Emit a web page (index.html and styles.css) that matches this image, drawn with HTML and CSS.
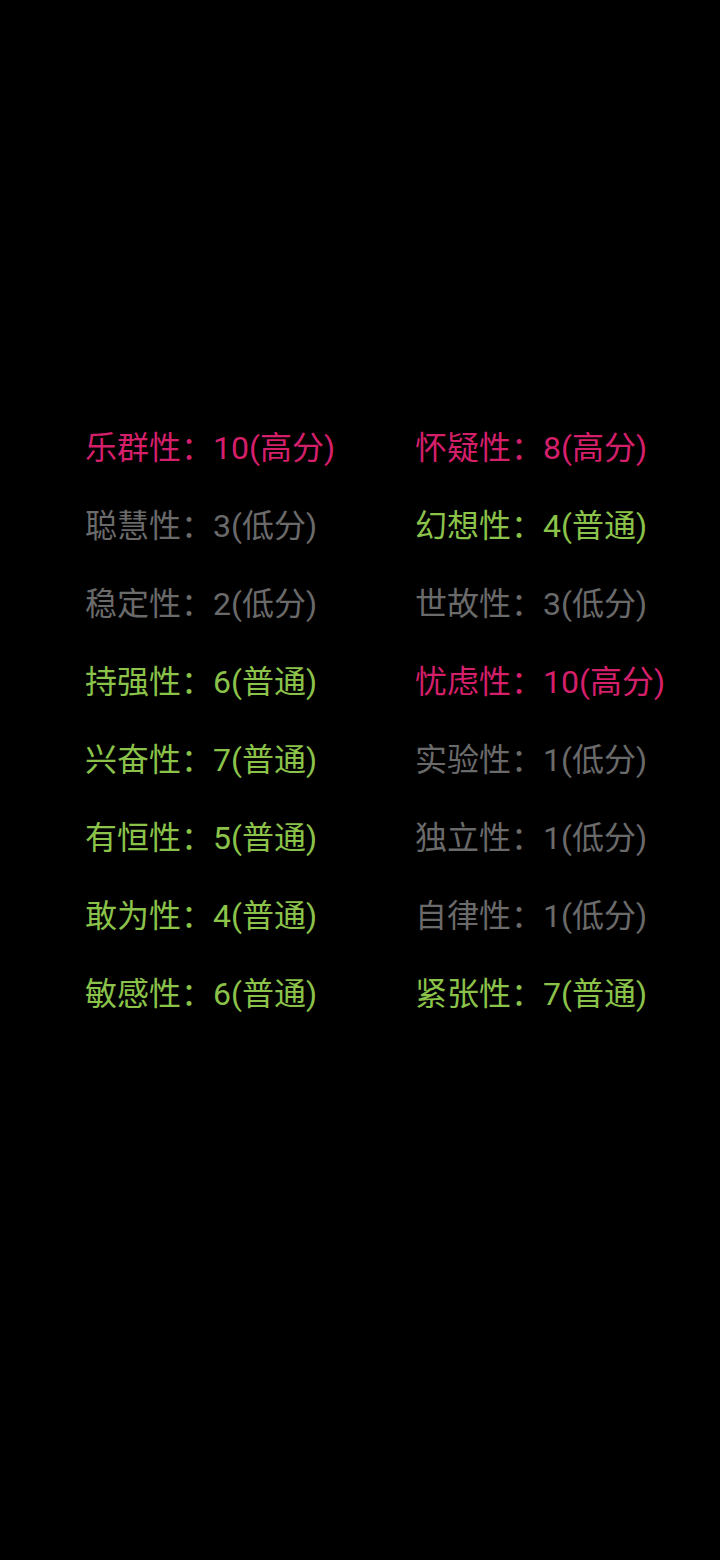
FILE: index.html
```html
<!DOCTYPE html>
<html lang="zh-CN">
<head>
<meta charset="utf-8">
<link rel="stylesheet" href="styles.css">
</head>
<body>
<div class="grid">
  <div class="item high">乐群性：10(高分)</div>
  <div class="item high">怀疑性：8(高分)</div>
  <div class="item low">聪慧性：3(低分)</div>
  <div class="item mid">幻想性：4(普通)</div>
  <div class="item low">稳定性：2(低分)</div>
  <div class="item low">世故性：3(低分)</div>
  <div class="item mid">持强性：6(普通)</div>
  <div class="item high">忧虑性：10(高分)</div>
  <div class="item mid">兴奋性：7(普通)</div>
  <div class="item low">实验性：1(低分)</div>
  <div class="item mid">有恒性：5(普通)</div>
  <div class="item low">独立性：1(低分)</div>
  <div class="item mid">敢为性：4(普通)</div>
  <div class="item low">自律性：1(低分)</div>
  <div class="item mid">敏感性：6(普通)</div>
  <div class="item mid">紧张性：7(普通)</div>
</div>
</body>
</html>
```
FILE: styles.css
```css
html, body {
  margin: 0;
  padding: 0;
  background: #000;
  height: 1560px;
}
.grid {
  display: grid;
  grid-template-columns: 330px 330px;
  padding: 409px 0 0 85px;
}
.item {
  font-family: Roboto, "Noto Sans CJK SC", sans-serif;
  font-size: 32px;
  line-height: 78px;
  height: 78px;
  white-space: nowrap;
}
.high { color: #d41f6a; }
.mid { color: #8bc34a; }
.low { color: #6a6a6a; }
```
